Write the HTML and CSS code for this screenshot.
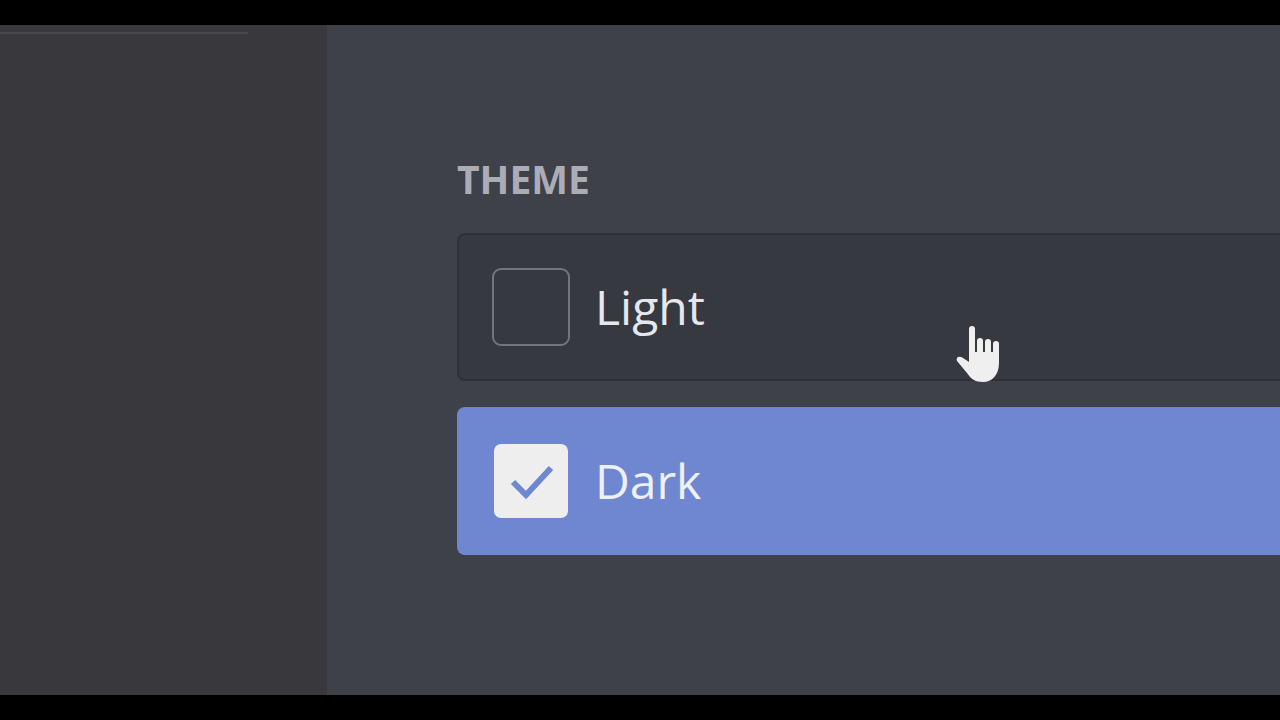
FILE: index.html
```html
<!DOCTYPE html>
<html lang="en">
<head>
  <meta charset="UTF-8">
  <meta name="viewport" content="width=device-width, initial-scale=1.0">
  <title>Appearance</title>
  <link rel="stylesheet" href="styles.css">
</head>
<body>

<div class="settings">
  <aside class="sidebar">
    <hr class="separator">
  </aside>

  <main class="content">
    <form>
      <fieldset class="theme">
        <legend class="title">THEME</legend>
        <div class="options">
          <label class="option">
            <span class="box"><input type="radio" name="theme" value="light"></span>
            <span>Light</span>
          </label>
          <label class="option selected">
            <span class="box">
              <input type="radio" name="theme" value="dark" checked>
              <svg class="check" viewBox="0 0 80 80" aria-hidden="true">
                <path d="M22 41 L35 54 L60 27" fill="none" stroke="#6f87d1" stroke-width="6"/>
              </svg>
            </span>
            <span>Dark</span>
          </label>
        </div>
      </fieldset>
    </form>
  </main>

  <!-- hand pointer -->
  <svg class="pointer" viewBox="0 0 44 59" aria-hidden="true">
    <path fill="#efeff0" d="M13 4 Q13 1 16 1 Q19 1 19 4 V27 H21 V16 Q21 13 24 13 Q27 13 27 16 V27 H29 V17 Q29 14 32 14 Q35 14 35 17 V27 H37 V19 Q37 16 40 16 Q43 16 43 19 V38 C43 50 36 57 27 57 C19 57 15 54 11 48 L1 36 Q0 33 2 32 Q4 31 7 33 L13 37 Z"/>
  </svg>
</div>

</body>
</html>
```
FILE: styles.css
```css
* {
    box-sizing: border-box;
}

body {
    margin: 0;
    padding: 25px 0;
    background-color: #000;
    font-family: "Open Sans", "Noto Sans", sans-serif;
    overflow-x: hidden;
}

.settings {
    position: relative;
    display: flex;
    min-height: calc(100vh - 50px);
    background-color: #3e4149;
}

.sidebar {
    flex: 0 0 327px;
    padding: 7px 79px 0 0;
    background-color: #39393d;
}

.separator {
    height: 2px;
    margin: 0;
    border: none;
    background-color: #47474d;
}

.content {
    flex: 1;
    padding: 127px 0 0 130px;
}

.theme {
    margin: 0;
    padding: 0;
    border: none;
}

.title {
    padding: 0;
    margin-bottom: 27px;
    color: #acacb6;
    font-size: 39px;
    font-weight: 700;
    line-height: 54px;
}

.options {
    display: flex;
    flex-direction: column;
    gap: 26px;
}

.option {
    display: flex;
    align-items: center;
    gap: 24px;
    padding: 32px;
    border: 2px solid #2e3037;
    border-right: none;
    border-radius: 8px 0 0 8px;
    background-color: #373940;
    color: #e6e7ed;
    font-size: 48px;
    font-weight: 500;
    line-height: 68px;
    cursor: pointer;
}

.selected {
    border-color: #6f87d1;
    background-color: #6f87d1;
    color: #eef0f8;
}

.box {
    display: grid;
    place-items: center;
    width: 80px;
    height: 80px;
}

.box input,
.check {
    grid-area: 1 / 1;
}

.box input {
    appearance: none;
    width: 78px;
    height: 78px;
    margin: 0;
    border: 2px solid #73757d;
    border-radius: 9px;
}

.box input:checked {
    width: 74px;
    height: 74px;
    border: none;
    border-radius: 7px;
    background-color: #eeeeef;
}

.check {
    width: 80px;
    height: 80px;
    pointer-events: none;
}

/* floats over the options */
.pointer {
    position: absolute;
    top: 300px;
    left: 956px;
    width: 44px;
    height: 59px;
    pointer-events: none;
}
```
